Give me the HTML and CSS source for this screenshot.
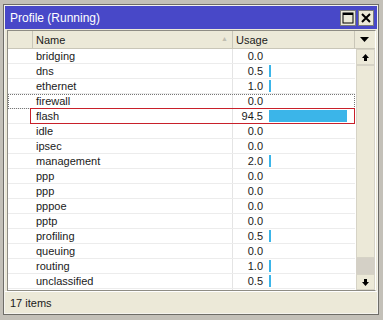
FILE: index.html
```html
<!DOCTYPE html>
<html lang="en">
<head>
    <meta charset="UTF-8">
    <title>Profile (Running)</title>
    <link rel="stylesheet" href="styles.css">
</head>
<body>
    <div class="window">
        <div class="title-bar">
            <span class="title">Profile (Running)</span>
            <div class="title-buttons">
                <button class="win-btn">
                    <svg width="12" height="12" viewBox="0 0 12 12"><rect x="1" y="1" width="10" height="10" fill="none" stroke="#000" stroke-width="1"/><rect x="1" y="1" width="10" height="2" fill="#000"/></svg>
                </button>
                <button class="win-btn">
                    <svg width="12" height="12" viewBox="0 0 12 12"><path d="M2 2 L10 10 M10 2 L2 10" stroke="#000" stroke-width="2"/></svg>
                </button>
            </div>
        </div>

        <div class="list">
            <div class="list-head">
                <div class="cell c-icon"></div>
                <div class="cell c-name">Name <span class="sort">&#9650;</span></div>
                <div class="cell c-usage">Usage</div>
                <div class="head-menu">
                    <svg width="9" height="5" viewBox="0 0 9 5"><path d="M0 0 H9 L4.5 5 Z" fill="#000"/></svg>
                </div>
            </div>

            <div class="list-body">
                <div class="rows" id="rows"></div>
                <div class="scrollbar">
                    <div class="sb-btn">
                        <svg width="7" height="7" viewBox="0 0 7 7"><path d="M3.5 0 L7 4 H5 V7 H2 V4 H0 Z" fill="#000"/></svg>
                    </div>
                    <div class="sb-thumb"></div>
                    <div class="sb-track"></div>
                    <div class="sb-btn">
                        <svg width="7" height="7" viewBox="0 0 7 7"><path d="M3.5 7 L7 3 H5 V0 H2 V3 H0 Z" fill="#000"/></svg>
                    </div>
                </div>
            </div>
        </div>

        <div class="status">17 items</div>
    </div>

    <script>
        const profiles = [
            ['bridging', 0.0], ['dns', 0.5], ['ethernet', 1.0], ['firewall', 0.0],
            ['flash', 94.5], ['idle', 0.0], ['ipsec', 0.0], ['management', 2.0],
            ['ppp', 0.0], ['ppp', 0.0], ['pppoe', 0.0], ['pptp', 0.0],
            ['profiling', 0.5], ['queuing', 0.0], ['routing', 1.0], ['unclassified', 0.5],
            ['wireless', 0.0]
        ];

        const rows = document.getElementById('rows');

        profiles.forEach(([name, usage]) => {
            const row = document.createElement('div');
            row.className = 'row';
            if (name === 'firewall') row.classList.add('focused');
            if (name === 'flash') row.classList.add('selected');

            let bar = '';
            if (usage > 0) {
                const w = Math.max(2, Math.round(usage * 0.83));
                bar = '<span class="bar" style="width:' + w + 'px"></span>';
            }

            row.innerHTML =
                '<div class="cell c-icon"></div>' +
                '<div class="cell c-name">' + name + '</div>' +
                '<div class="cell c-usage"><span class="num">' + usage.toFixed(1) + '</span>' + bar + '</div>';
            rows.appendChild(row);
        });
    </script>
</body>
</html>
```

FILE: styles.css
```css
body {
    margin: 0;
    background: #c3c0b8;
    font-family: "Liberation Sans", Arial, sans-serif;
    font-size: 11px;
    color: #1a1a1a;
}

.window {
    margin: 4px 0 0 3px;
    width: 372px;
    height: 307px;
    background: #ece9d8;
    border: 1px solid #6e6d68;
    outline: 1px solid #f4f3ee;
    outline-offset: -2px;
    display: flex;
    flex-direction: column;
    padding: 1px;
}

.title-bar {
    height: 23px;
    background: #4848c8;
    display: flex;
    align-items: center;
    justify-content: space-between;
    padding: 0 3px 0 5px;
}

.title {
    color: #fff;
    font-size: 12px;
}

.title-buttons {
    display: flex;
    gap: 2px;
}

.win-btn {
    width: 16px;
    height: 16px;
    padding: 0;
    margin: 0;
    border: 1px solid #7a7a7a;
    background: #ece9d8;
    display: flex;
    align-items: center;
    justify-content: center;
}

.list {
    margin: 1px 1px 0 2px;
    border: 1px solid #8e8c84;
    border-right-color: #fff;
    background: #fff;
}

.list-head {
    display: flex;
    height: 17px;
    background: #ece9d8;
    border-bottom: 1px solid #c9c6b8;
}

.list-head .cell {
    border-right: 1px solid #c9c6b8;
    display: flex;
    align-items: center;
}

.cell {
    box-sizing: border-box;
    height: 100%;
}

.c-icon {
    width: 25px;
}

.c-name {
    width: 200px;
    padding-left: 3px;
    position: relative;
}

.c-usage {
    width: 122px;
    padding-left: 3px;
}

.sort {
    position: absolute;
    right: 4px;
    top: 4px;
    font-size: 7px;
    color: #c0bdb0;
}

.head-menu {
    width: 18px;
    display: flex;
    align-items: center;
    justify-content: center;
}

.list-body {
    display: flex;
    height: 241px;
    overflow: hidden;
}

.rows {
    width: 347px;
}

.row {
    display: flex;
    height: 15px;
    box-sizing: border-box;
    border-bottom: 1px solid #ececec;
    line-height: 14px;
}

.row .c-name {
    padding-left: 3px;
}

.row .c-usage {
    border-left: 1px solid #e4e4e4;
    margin-left: -1px;
    display: flex;
    align-items: center;
    padding-left: 0;
}

.num {
    width: 30px;
    text-align: right;
}

.bar {
    height: 12px;
    margin-left: 6px;
    background: #3bb5e9;
}

.row.focused {
    outline: 1px dotted #777;
    outline-offset: -1px;
}

.row.selected {
    position: relative;
}

.row.selected::after {
    content: "";
    position: absolute;
    left: 22px;
    right: 0;
    top: -1px;
    bottom: -1px;
    border: 1px solid #c8202a;
}

.scrollbar {
    width: 19px;
    display: flex;
    flex-direction: column;
    background: #ece9d8;
    border-left: 1px solid #fff;
}

.sb-btn {
    height: 16px;
    display: flex;
    align-items: center;
    justify-content: center;
    border: 1px solid #d6d3c6;
    box-sizing: border-box;
}

.sb-thumb {
    height: 193px;
    border: 1px solid #d6d3c6;
    box-sizing: border-box;
}

.sb-track {
    flex: 1;
    background: #d4d0c6;
}

.status {
    flex: 1;
    padding: 5px 0 0 5px;
    border-top: 1px solid #fff;
}
```
